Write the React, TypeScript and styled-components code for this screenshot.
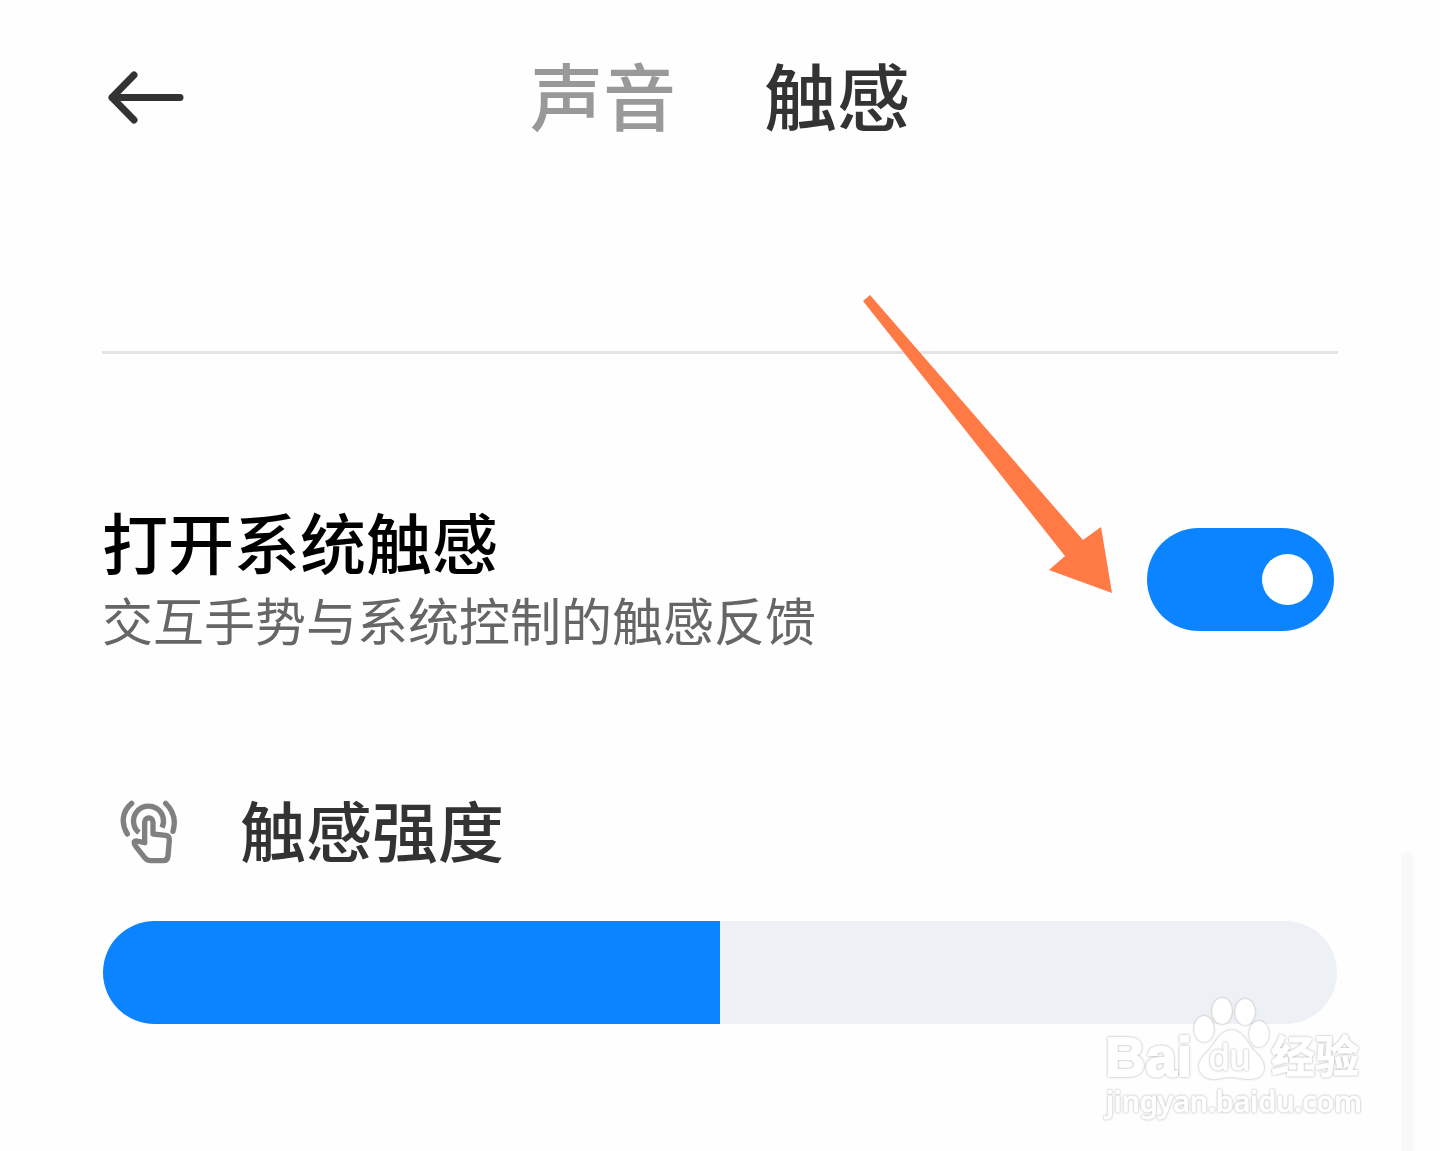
import React, { useState } from "react";
import styled, { createGlobalStyle } from "styled-components";

const BLUE = "#0d84ff";
const TRACK = "#edf1f6";

const GlobalStyle = createGlobalStyle`
  * { box-sizing: border-box; }
  body {
    margin: 0;
    background: #fefefe;
    font-family: "Noto Sans CJK SC", "Noto Sans", sans-serif;
  }
  button { font-family: inherit; }
`;

const Page = styled.div`
  position: relative;
  min-height: 100vh;
  padding: 57px 102px 0;
  overflow: hidden;
`;

const Header = styled.header`
  display: grid;
  grid-template-columns: 1fr auto 1fr;
  align-items: center;
  height: 80px;
`;

const BackButton = styled.button`
  justify-self: start;
  display: flex;
  padding: 0 6px;
  border: 0;
  background: none;
  cursor: pointer;
`;

const Tabs = styled.nav`
  display: flex;
  gap: 88px;
`;

const Tab = styled.button<{ $active: boolean }>`
  padding: 0 0 8px;
  border: 0;
  background: none;
  font-size: 73px;
  line-height: 72px;
  font-weight: 500;
  color: ${(p) => (p.$active ? "#333" : "#999")};
  cursor: pointer;
`;

const Divider = styled.hr`
  height: 3px;
  margin: 214px 0 0;
  border: 0;
  background: #e4e4e4;
`;

const SettingRow = styled.section`
  position: relative;
  display: flex;
  align-items: center;
  justify-content: space-between;
  margin-top: 146px;
  padding-right: 4px;
`;

const SettingText = styled.label`
  display: flex;
  flex-direction: column;
`;

const SettingTitle = styled.span`
  font-size: 66px;
  line-height: 80px;
  font-weight: 500;
  color: #000;
`;

const SettingNote = styled.span`
  font-size: 51px;
  line-height: 78px;
  color: #666;
`;

const Switch = styled.input`
  appearance: none;
  display: flex;
  align-items: center;
  flex: none;
  width: 187px;
  height: 103px;
  margin: 0;
  padding: 0 21px;
  border-radius: 52px;
  background: ${TRACK};
  cursor: pointer;

  &::before {
    content: "";
    width: 51px;
    height: 51px;
    border-radius: 50%;
    background: #fff;
  }
  &:checked {
    justify-content: flex-end;
    background: ${BLUE};
  }
`;

const Pointer = styled.svg`
  position: absolute;
  right: 226px;
  bottom: 65px;
  pointer-events: none;
`;

const StrengthLabel = styled.label`
  display: flex;
  align-items: center;
  gap: 62px;
  margin-top: 134px;
  padding-left: 18px;
`;

const StrengthTitle = styled.span`
  padding-bottom: 8px;
  font-size: 66px;
  line-height: 72px;
  font-weight: 500;
  color: #333;
`;

const Slider = styled.input<{ $percent: number }>`
  appearance: none;
  display: block;
  width: calc(100% - 2px);
  height: 103px;
  margin: 49px 1px 0;
  border-radius: 52px;
  background: linear-gradient(
    to right,
    ${BLUE} ${(p) => p.$percent}%,
    ${TRACK} ${(p) => p.$percent}%
  );
  cursor: pointer;

  &::-webkit-slider-thumb {
    appearance: none;
    width: 1px;
    height: 103px;
    background: transparent;
  }
`;

const ScrollThumb = styled.div`
  position: absolute;
  top: 851px;
  right: 26px;
  bottom: 0;
  width: 13px;
  border-radius: 6px 6px 0 0;
  background: #f9f9f9;
`;

const Watermark = styled.div`
  position: absolute;
  right: 76px;
  bottom: 32px;
  width: 262px;
  pointer-events: none;
`;

const WatermarkLogo = styled.svg`
  display: block;
  overflow: visible;
  fill: #fff;
  stroke: #fff;
  stroke-width: 2;
`;

const Outlined = styled.g`
  filter: drop-shadow(0 0 1px #aaa);
`;

const WatermarkUrl = styled.div`
  padding-left: 4px;
  font: 500 29px/36px "Noto Sans", sans-serif;
  color: #fff;
  -webkit-text-stroke: 1px #fff;
  filter: drop-shadow(0 0 1px #aaa);
`;

function BackIcon() {
  return (
    <svg width="76" height="53" viewBox="0 0 76 53" fill="none" stroke="#333" strokeWidth="7" strokeLinecap="round" strokeLinejoin="round">
      <path d="M4 26.5H72M26 4L4 26.5L26 49" />
    </svg>
  );
}

function TouchIcon() {
  return (
    <svg width="58" height="64" viewBox="29 30 174 192" fill="none" stroke="#808080" strokeWidth="16" strokeLinecap="round" strokeLinejoin="round">
      <path d="M64 40C34 65 32 101 51 132" />
      <path d="M166 40C190 63 197 92 188 124" />
      <path d="M86 128A45 45 0 1 1 155 113" strokeLinecap="butt" />
      <path d="M103 158V96a12.500 12.500 0 0 1 25 0V132L166 136Q178 138 177 150L173 198Q171 212 159 212H122Q110 212 103 203L77 170Q65 153 79 153L103 158" />
    </svg>
  );
}

export default function App() {
  const [tab, setTab] = useState("触感");
  const [enabled, setEnabled] = useState(true);
  const [strength, setStrength] = useState(50);

  return (
    <>
      <GlobalStyle />
      <Page>
        <Header>
          <BackButton aria-label="返回">
            <BackIcon />
          </BackButton>
          <Tabs>
            {["声音", "触感"].map((name) => (
              <Tab key={name} $active={tab === name} onClick={() => setTab(name)}>
                {name}
              </Tab>
            ))}
          </Tabs>
        </Header>
        <Divider />
        <SettingRow>
          <SettingText htmlFor="haptics">
            <SettingTitle>打开系统触感</SettingTitle>
            <SettingNote>交互手势与系统控制的触感反馈</SettingNote>
          </SettingText>
          <Switch id="haptics" type="checkbox" checked={enabled} onChange={(e) => setEnabled(e.target.checked)} />
          <Pointer width="249" height="298" viewBox="0 0 249 298" aria-hidden="true">
            <path fill="#ff7a45" d="M0 6L7 0L220 245L238 232L249 298L186 275L202 261Z" />
          </Pointer>
        </SettingRow>
        <StrengthLabel htmlFor="strength">
          <TouchIcon />
          <StrengthTitle>触感强度</StrengthTitle>
        </StrengthLabel>
        <Slider
          id="strength"
          type="range"
          min="0"
          max="100"
          value={strength}
          $percent={strength}
          onChange={(e) => setStrength(Number(e.target.value))}
        />
        <ScrollThumb />
        <Watermark>
          <WatermarkLogo width="262" height="88" viewBox="0 0 262 88">
            <Outlined>
              <text x="3" y="81" fontSize="56" fontWeight="700" fontFamily="Liberation Sans, Arial, sans-serif">Bai</text>
              <ellipse cx="102" cy="34" rx="9" ry="12" />
              <ellipse cx="120" cy="16" rx="9" ry="12" />
              <ellipse cx="143" cy="17" rx="9" ry="12" />
              <ellipse cx="157" cy="39" rx="9" ry="12" />
            </Outlined>
            <Outlined>
              <path d="M129 36C137 36 142 43 147 51C153 60 161 64 161 72C161 80 155 83 147 83C138 83 136 81 129 81C122 81 117 84 110 83C101 82 98 77 98 70C99 61 107 59 112 50C117 42 122 36 129 36Z" />
            </Outlined>
            <Outlined>
              <text x="107" y="75" fontSize="37" strokeWidth="1" fontFamily="Liberation Sans, Arial, sans-serif">du</text>
            </Outlined>
            <Outlined>
              <text x="169" y="78" fontSize="44" fontWeight="700" strokeWidth="1" fontFamily="Noto Sans CJK SC, sans-serif">经验</text>
            </Outlined>
          </WatermarkLogo>
          <WatermarkUrl>jingyan.baidu.com</WatermarkUrl>
        </Watermark>
      </Page>
    </>
  );
}
